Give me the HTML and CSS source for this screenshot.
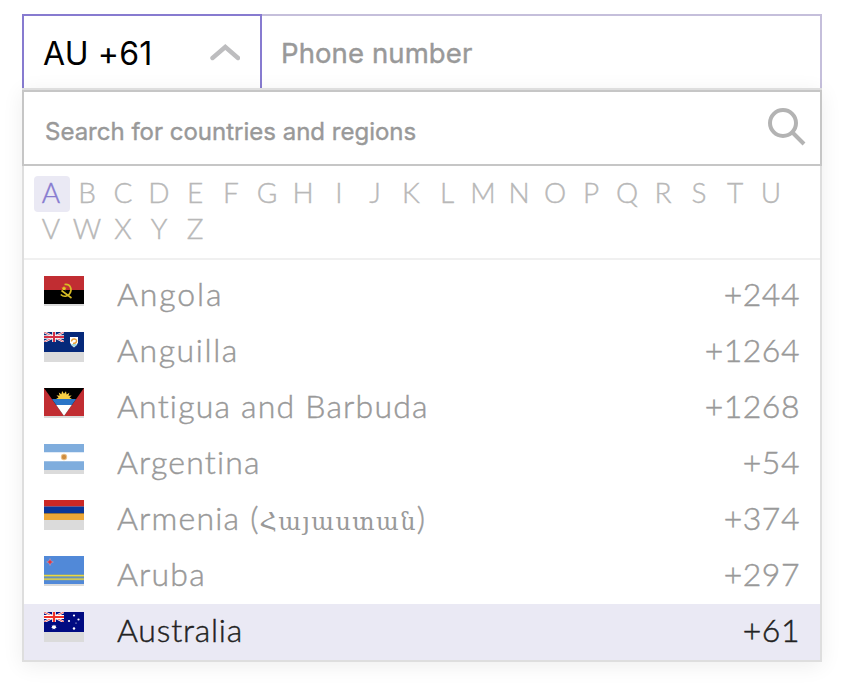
FILE: index.html
```html
<!DOCTYPE html>
<html lang="en">
<head>
<meta charset="utf-8">
<title>Phone number</title>
<link rel="stylesheet" href="styles.css">
</head>
<body>
<main class="picker">
  <div class="fields">
    <button class="country" type="button">
      <span>AU +61</span>
      <svg class="chevron" width="30" height="18" viewBox="0 0 30 18"><path d="M2.500 15 15.300 4 28 15" fill="none" stroke="#bdbdbf" stroke-width="4.400" stroke-linecap="round"/></svg>
    </button>
    <div class="phone"><span>Phone number</span></div>
  </div>
  <section class="dropdown">
    <div class="search">
      <span>Search for countries and regions</span>
      <svg class="glass" width="40" height="40" viewBox="0 0 40 40" fill="none" stroke="#b3b3b3" stroke-width="4"><circle cx="16" cy="16" r="13"/><path d="M25.500 25.500 37 37"/></svg>
    </div>
    <nav class="letters">
      <b class="active">A</b><b>B</b><b>C</b><b>D</b><b>E</b><b>F</b><b>G</b><b>H</b><b>I</b><b>J</b><b>K</b><b>L</b><b>M</b><b>N</b><b>O</b><b>P</b><b>Q</b><b>R</b><b>S</b><b>T</b><b>U</b><b>V</b><b>W</b><b>X</b><b>Y</b><b>Z</b>
    </nav>
    <ul class="list">
      <li>
        <svg class="flag" viewBox="0 0 40 30"><path fill="#c12d32" d="M0 0h40v14H0z"/><path d="M0 14h40v14H0z"/><path d="M20.500 8.500c6-1 8 5 5.300 9-2 3-6 4-9 1M17.500 14.500l10 7.500" fill="none" stroke="#d8bd25" stroke-width="1.600"/><path fill="#e5cb22" d="m20 10 .8 1.500 1.700.2-1.200 1.200.3 1.700-1.600-.8-1.500.8.3-1.700-1.300-1.200 1.700-.2z"/></svg>
        <span class="name widest">Angola</span><span class="code">+244</span>
      </li>
      <li>
        <svg class="flag" viewBox="0 0 40 30"><path fill="#06297a" d="M0 0h40v20H0z"/><svg width="20" height="10"><path d="M0 0 20 10M20 0 0 10" stroke="#fff" stroke-width="2.200"/><path d="M0 0 20 10M20 0 0 10" stroke="#d32f45" stroke-width=".8"/><path d="M10 0v10M0 5h20" stroke="#fff" stroke-width="3.600"/><path d="M10 0v10M0 5h20" stroke="#d32f45" stroke-width="2"/></svg><path fill="#fff" d="M26 5h8v5.500q-.5 3-4 5-3.500-2-4-5z"/><path fill="#9bd5df" d="M27 12h6q-1 2-3 3-2-1-3-3z"/><path d="M27.500 9.500q.5-3 3-2.500t2 2.500-3.500 2" fill="none" stroke="#eaa23b" stroke-width="1.400"/></svg>
        <span class="name wider">Anguilla</span><span class="code">+1264</span>
      </li>
      <li>
        <svg class="flag" viewBox="0 0 40 30"><path fill="#c12d32" d="M0 0h40v28H0z"/><path d="M0 0h40L20 28z"/><path fill="#f8cf45" d="m12 11 2.500-1.500-2-2.200 3.100.4-.8-3.100 2.600 1.700.7-3.300 1.900 2.800L22 3.200l.6 3.200 2.800-1.700-.9 3.100 3.200-.3-2.200 2.100L28 11z"/><path fill="#2a75c7" d="M7.900 11h24.200l-4.300 6H12.200z"/><path fill="#fff" d="M12.200 17h15.600L20 28z"/></svg>
        <span class="name">Antigua and Barbuda</span><span class="code">+1268</span>
      </li>
      <li>
        <svg class="flag" viewBox="0 0 40 30"><path fill="#7faddd" d="M0 0h40v26H0z"/><path fill="#fff" d="M0 8.300h40v9H0z"/><circle cx="20" cy="13" r="3.200" fill="#edc38b"/><circle cx="20" cy="13" r="2.200" fill="#cf8d3f"/></svg>
        <span class="name">Argentina</span><span class="code">+54</span>
      </li>
      <li>
        <svg class="flag" viewBox="0 0 40 30"><path fill="#cb2825" d="M0 0h40v6.500H0z"/><path fill="#0a3799" d="M0 6.500h40v7H0z"/><path fill="#eca738" d="M0 13.500h40V20H0z"/><path fill="#95733f" d="M0 13h40v1H0z"/></svg>
        <span class="name">Armenia <span class="native">(<span class="armenian">Հայաստան</span>)</span></span><span class="code">+374</span>
      </li>
      <li>
        <svg class="flag" viewBox="0 0 40 30"><path fill="#5189d8" d="M0 0h40v28H0z"/><path fill="#b9aaca" d="m6 2 1.300 2.800L10 6 7.300 7.300 6 10 4.700 7.300 2 6l2.700-1.200z"/><path fill="#d83746" d="m6 3 .9 2.100L9 6l-2.100.9L6 9l-.9-2.100L3 6l2.100-.9z"/><path fill="#789ba8" d="M0 18h40v3H0zM0 21.500h40v3H0z"/><path fill="#ebd83f" d="M0 19h40v1.200H0zM0 22.500h40v1.200H0z"/></svg>
        <span class="name">Aruba</span><span class="code">+297</span>
      </li>
      <li class="selected">
        <svg class="flag" viewBox="0 0 40 30"><path fill="#000b82" d="M0 0h40v20H0z"/><svg width="20" height="10"><path d="M0 0 20 10M20 0 0 10" stroke="#fff" stroke-width="2.400"/><path d="M0 0 20 10M20 0 0 10" stroke="#ee3028" stroke-width=".8"/><path d="M10 0v10M0 5h20" stroke="#fff" stroke-width="3.800"/><path d="M10 0v10M0 5h20" stroke="#ee3028" stroke-width="2.200"/></svg><g fill="#fff"><path d="m10 12.600.7 1.200 1.500-.3-.5 1.300 1 1-1.400.3-.2 1.400-1.100-.9-1.300.9-.2-1.500-1.300-.3 1-1-.5-1.300 1.600.3z"/><circle cx="30" cy="3.500" r="1.100"/><circle cx="25" cy="9" r="1.100"/><circle cx="34.500" cy="7.500" r="1.100"/><circle cx="32" cy="11" r=".6"/><circle cx="30" cy="16.500" r="1.200"/></g></svg>
        <span class="name tight">Australia</span><span class="code">+61</span>
      </li>
    </ul>
  </section>
</main>
</body>
</html>
```
FILE: styles.css
```css
* { box-sizing: border-box; }
body { margin: 0; height: 690px; overflow: hidden; background: #fff; font-family: Lato, "DejaVu Sans", sans-serif; }
.picker { width: 800px; margin: 14px 0 0 22px; }
.fields { display: flex; height: 74px; font-family: Inter, sans-serif; }
.country { display: flex; align-items: center; justify-content: space-between; width: 240px; padding: 3px 20px 0 19px; border: 2px solid #877bd0; border-bottom: 0; background: #fff; color: #000; font: 400 32px/1 Inter, sans-serif; letter-spacing: .2px; }
.chevron { margin-bottom: 3px; }
.phone { flex: 1; display: flex; align-items: center; padding: 3px 0 0 19px; border: 2px solid #c5bfdb; border-width: 2px 2px 0 0; color: #999; font: 400 27.500px/1 Inter, sans-serif; letter-spacing: .1px; -webkit-text-stroke: .4px; }
.dropdown { position: relative; height: 574px; border: 2px solid #dedede; background: #fff; box-shadow: 0 4px 20px rgba(0, 0, 0, .07); }
.search { display: flex; align-items: center; justify-content: space-between; height: 76px; margin: 0 -2px; padding: 7px 13px 0 21px; border: 2px solid #c6c6c6; color: #999; font: 400 24px/1 Inter, sans-serif; -webkit-text-stroke: .4px; }
.glass { margin-bottom: 9px; }
.letters { display: flex; flex-wrap: wrap; align-content: flex-start; height: 94px; padding: 10px 20px 0 10px; border-bottom: 2px solid #f0f0f0; }
.letters b { width: 36px; height: 36px; padding-right: 2px; border-radius: 4px; color: #b8b8b8; font-size: 28px; font-weight: 300; line-height: 32px; text-align: center; -webkit-text-stroke: .4px; }
.letters .active { background: #eae9f4; color: #877bd0; }
.list { margin: 0; padding: 8px 0 0; list-style: none; }
.list li { display: flex; height: 56px; padding: 0 20px; color: #999; font-size: 32px; font-weight: 300; line-height: 51px; white-space: nowrap; -webkit-text-stroke: .45px; }
.flag { width: 40px; height: 30px; margin: 8px 33px 0 0; background: #dbdbdb; }
.name { letter-spacing: 1.2px; }
.wider { letter-spacing: 1.6px; }
.widest { letter-spacing: 1.9px; }
.tight { letter-spacing: .8px; }
.code { margin-left: auto; letter-spacing: .5px; }
.armenian { font-family: "DejaVu Serif", serif; font-size: 24px; letter-spacing: 1.4px; -webkit-text-stroke: 0; }
.list .selected { background: #eae9f4; color: #222; }
```
